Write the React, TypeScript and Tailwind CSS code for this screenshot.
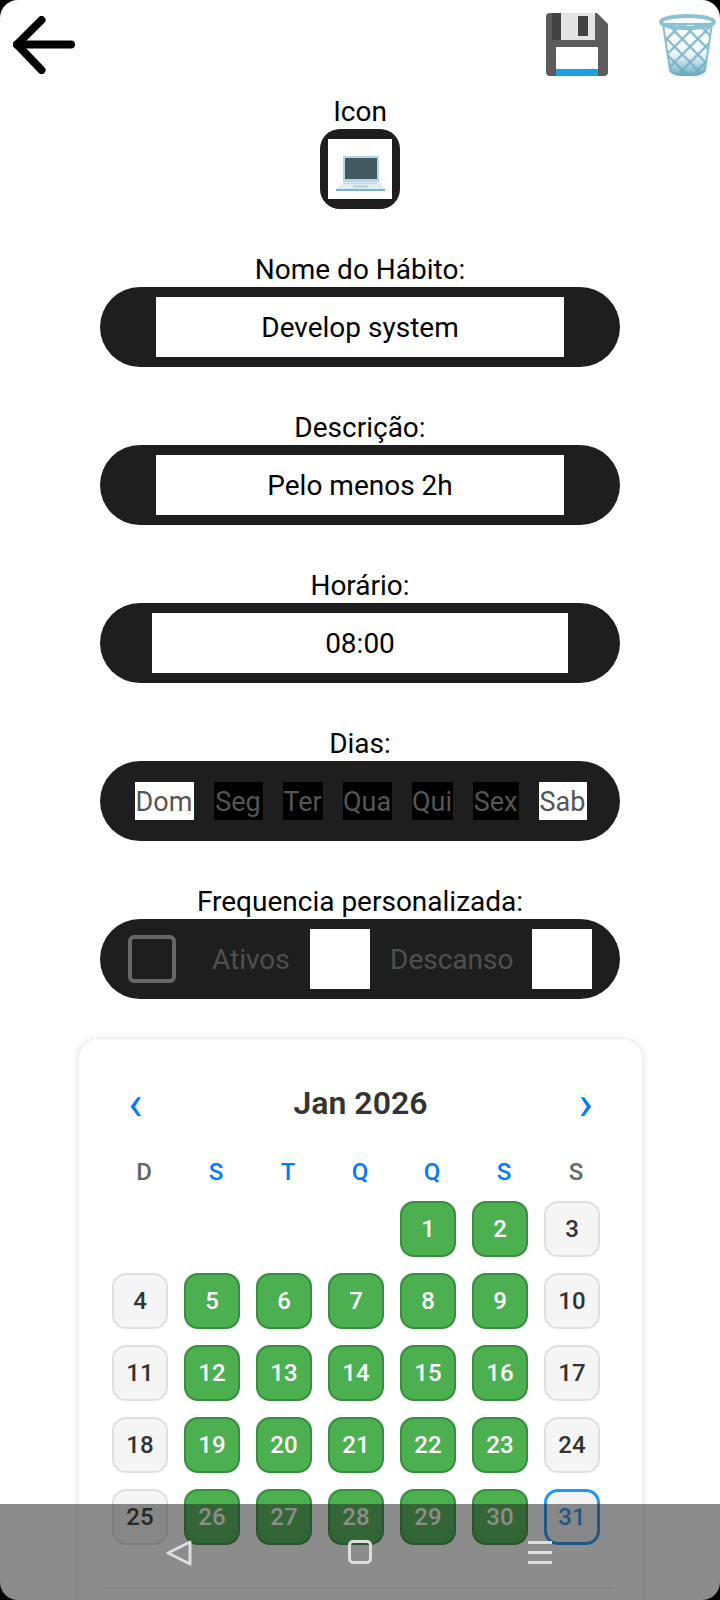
const font = "font-['Roboto',sans-serif]";

const days = ["Dom", "Seg", "Ter", "Qua", "Qui", "Sex", "Sab"];
const activeDays = ["Dom", "Sab"];
const dayWidths: Record<string, string> = {
  Dom: "w-[59px]",
  Seg: "w-[49px]",
  Ter: "w-[40px]",
  Qua: "w-[49px]",
  Qui: "w-[41px]",
  Sex: "w-[46px]",
  Sab: "w-[48px]",
};
const weekLabels = ["D", "S", "T", "Q", "Q", "S", "S"];
const restDays = [3, 4, 10, 11, 17, 18, 24, 25];

const ArrowBack = () => (
  <svg width="62" height="58" viewBox="0 0 62 58" fill="none" stroke="#000" strokeWidth="8" strokeLinecap="round" strokeLinejoin="round">
    <path d="M28.500 4 4 28.500 28.500 54" />
    <path d="M4 28.500H58" />
  </svg>
);

const Floppy = () => (
  <svg width="62" height="63" viewBox="0 0 62 63">
    <path d="M4 0H51L62 11V59a4 4 0 0 1-4 4H4a4 4 0 0 1-4-4V4a4 4 0 0 1 4-4Z" fill="#5c5c5c" />
    <rect x="6" y="0" width="9" height="27" fill="#424242" />
    <rect x="15" y="0" width="34" height="27" fill="#e4e4e4" />
    <rect x="32" y="3" width="10" height="20" fill="#424242" />
    <rect x="10" y="34" width="42" height="29" rx="1" fill="#fff" />
    <rect x="10" y="56" width="42" height="7" fill="#1a9fe8" />
  </svg>
);

const Trash = () => (
  <svg width="57" height="62" viewBox="0 0 57 62">
    <defs>
      <linearGradient id="fade" x1="0" y1="0" x2="0" y2="1">
        <stop offset="0" stopColor="#7fbacd" stopOpacity="0" />
        <stop offset="0.55" stopColor="#7fbacd" stopOpacity="0.1" />
        <stop offset="1" stopColor="#64a8c0" stopOpacity="1" />
      </linearGradient>
      <pattern id="mesh" width="11" height="11" patternUnits="userSpaceOnUse" patternTransform="rotate(45)">
        <path d="M0 0H11M0 0V11" stroke="#82bbcf" strokeWidth="4.500" />
      </pattern>
    </defs>
    <path d="M4 10 11 56c.5 3.500 9 6 17.500 6s17-2.500 17.500-6L53 10Z" fill="url(#mesh)" stroke="#86bfd2" strokeWidth="2" />
    <path d="M4 10 11 56c.5 3.500 9 6 17.500 6s17-2.500 17.500-6L53 10Z" fill="url(#fade)" />
    <ellipse cx="28.500" cy="8" rx="26.500" ry="6" fill="none" stroke="#8cc3d4" strokeWidth="4" />
  </svg>
);

const Laptop = () => (
  <svg width="49" height="35" viewBox="0 0 49 35">
    <rect x="7" y="0" width="36" height="26" rx="1" fill="#b3d6e4" />
    <rect x="9" y="2" width="32" height="21" fill="#41595f" />
    <path d="M7 26H43L49 33H0Z" fill="#e0edf3" />
    <rect x="17" y="29" width="15" height="3" fill="#bcd8e4" />
    <path d="M8 27.500H41" stroke="#bcd8e4" strokeWidth="1" />
    <rect x="0" y="33" width="49" height="2" fill="#78b4c6" />
  </svg>
);

const Label = ({ text }: { text: string }) => (
  <div className="h-[31px] text-[28px] leading-[28px] text-black">{text}</div>
);

const Field = ({ label, value, inner }: { label: string; value: string; inner: string }) => (
  <div className="flex flex-col items-center">
    <Label text={label} />
    <div className="flex h-20 w-[520px] items-center justify-center rounded-[40px] bg-[#1e1e1e]">
      <div className={`flex h-[60px] items-center justify-center bg-white pt-[2px] text-[28px] text-black ${inner}`}>{value}</div>
    </div>
  </div>
);

const DayCell = ({ n }: { n: number }) => {
  const rest = restDays.includes(n);
  const today = n === 31;
  return (
    <div
      className={`flex h-[56px] w-[56px] items-center justify-center rounded-[14px] text-[24px] font-medium ${
        today
          ? "border-[3px] border-[#2196f3] bg-[#f5f5f5] text-[#2196f3]"
          : rest
            ? "border-2 border-[#e0e0e0] bg-[#f5f5f5] text-[#333]"
            : "border-2 border-[#388e3c] bg-[#4caf50] text-white"
      }`}
    >
      {n}
    </div>
  );
};

const App = () => {
  const cells: (number | null)[] = [null, null, null, null];
  for (let i = 1; i <= 31; i++) cells.push(i);

  return (
    <div className={`relative h-[1600px] w-[720px] overflow-hidden bg-white ${font}`}>
      <div className="flex h-[90px] items-start pt-[13px]">
        <div className="ml-[13px] mt-[3px]">
          <ArrowBack />
        </div>
        <div className="ml-[471px]">
          <Floppy />
        </div>
        <div className="ml-[51px] mt-[1px]">
          <Trash />
        </div>
      </div>

      <div className="flex flex-col items-center">
        <div className="h-[36px] pt-[7px] text-[28px] leading-[30px] text-black">Icon</div>
        <div className="mt-[3px] flex h-20 w-20 items-center justify-center rounded-[20px] bg-[#1e1e1e]">
          <div className="flex h-[60px] w-16 items-center justify-center bg-white pt-2">
            <Laptop />
          </div>
        </div>
      </div>

      <div className="mt-[47px] flex flex-col gap-[47px]">
        <Field label="Nome do Hábito:" value="Develop system" inner="w-[408px]" />
        <Field label="Descrição:" value="Pelo menos 2h" inner="w-[408px]" />
        <Field label="Horário:" value="08:00" inner="w-[416px]" />

        <div className="flex flex-col items-center">
          <Label text="Dias:" />
          <div className="flex h-20 w-[520px] items-center justify-center gap-5 rounded-[40px] bg-[#1e1e1e] pl-[1px]">
            {days.map((d) => (
              <div
                key={d}
                className={`flex h-[38px] items-center justify-center pt-[3px] text-[27px] text-[#555] ${dayWidths[d]} ${
                  activeDays.includes(d) ? "bg-white" : "bg-black"
                }`}
              >
                {d}
              </div>
            ))}
          </div>
        </div>

        <div className="flex flex-col items-center">
          <Label text="Frequencia personalizada:" />
          <div className="flex h-20 w-[520px] items-center rounded-[40px] bg-[#1e1e1e] pl-7 text-[28px] text-[#4f4f4f]">
            <div className="h-12 w-12 rounded-[6px] border-4 border-[#666]" />
            <div className="ml-[36px] w-[98px] pt-[2px]">Ativos</div>
            <div className="h-[60px] w-[60px] bg-white" />
            <div className="ml-[20px] w-[142px] pt-[2px]">Descanso</div>
            <div className="h-[60px] w-[60px] bg-white" />
          </div>
        </div>
      </div>

      <div className="absolute left-[78px] top-[1038px] h-[620px] w-[565px] rounded-[20px] border border-[#eee] bg-white px-[33px] shadow-[0_1px_6px_rgba(0,0,0,0.12)]">
        <div className="flex h-[88px] items-end justify-between px-[16px]">
          <span className="mb-[1px] text-[48px] font-normal leading-[44px] text-[#007aff]">‹</span>
          <span className="mb-[2px] text-[32px] font-semibold leading-[44px] text-[#333]">Jan 2026</span>
          <span className="mb-[1px] text-[48px] font-normal leading-[44px] text-[#007aff]">›</span>
        </div>
        <div className="-ml-[4px] mt-[29px] grid grid-cols-[repeat(7,72px)]">
          {weekLabels.map((w, i) => (
            <div
              key={i}
              className={`text-center text-[24px] font-medium leading-[32px] ${
                i === 0 || i === 6 ? "text-[#666]" : "text-[#007aff]"
              }`}
            >
              {w}
            </div>
          ))}
        </div>
        <div className="mt-[13px] grid grid-cols-[repeat(7,56px)] gap-x-4 gap-y-4">
          {cells.map((n, i) => (n === null ? <div key={i} className="h-[56px]" /> : <DayCell key={i} n={n} />))}
        </div>
        <div className="-ml-[6px] -mr-[4px] mt-[42px] h-px bg-[#eee]" />
      </div>

      <div className="absolute inset-x-0 bottom-0 flex h-24 items-start justify-between bg-[rgba(30,30,30,0.51)] pl-[166px] pr-[168px] pt-9">
        <svg width="26" height="26" viewBox="0 0 26 26" fill="none" stroke="#ddd" strokeWidth="3" strokeLinejoin="round">
          <path d="M24 2 2 13 24 24Z" />
        </svg>
        <div className="h-6 w-6 rounded-[5px] border-[3px] border-[#ddd]" />
        <div className="mt-[1px] flex h-[23px] w-6 flex-col justify-between">
          <div className="h-[3px] bg-[#ddd]" />
          <div className="h-[3px] bg-[#ddd]" />
          <div className="h-[3px] bg-[#ddd]" />
        </div>
      </div>

      {/* rounded screen corners */}
      <div className="pointer-events-none absolute inset-0 overflow-hidden">
        <div className="absolute -inset-[26px] rounded-[44px] border-[26px] border-black" />
      </div>
    </div>
  );
};

export default App;
